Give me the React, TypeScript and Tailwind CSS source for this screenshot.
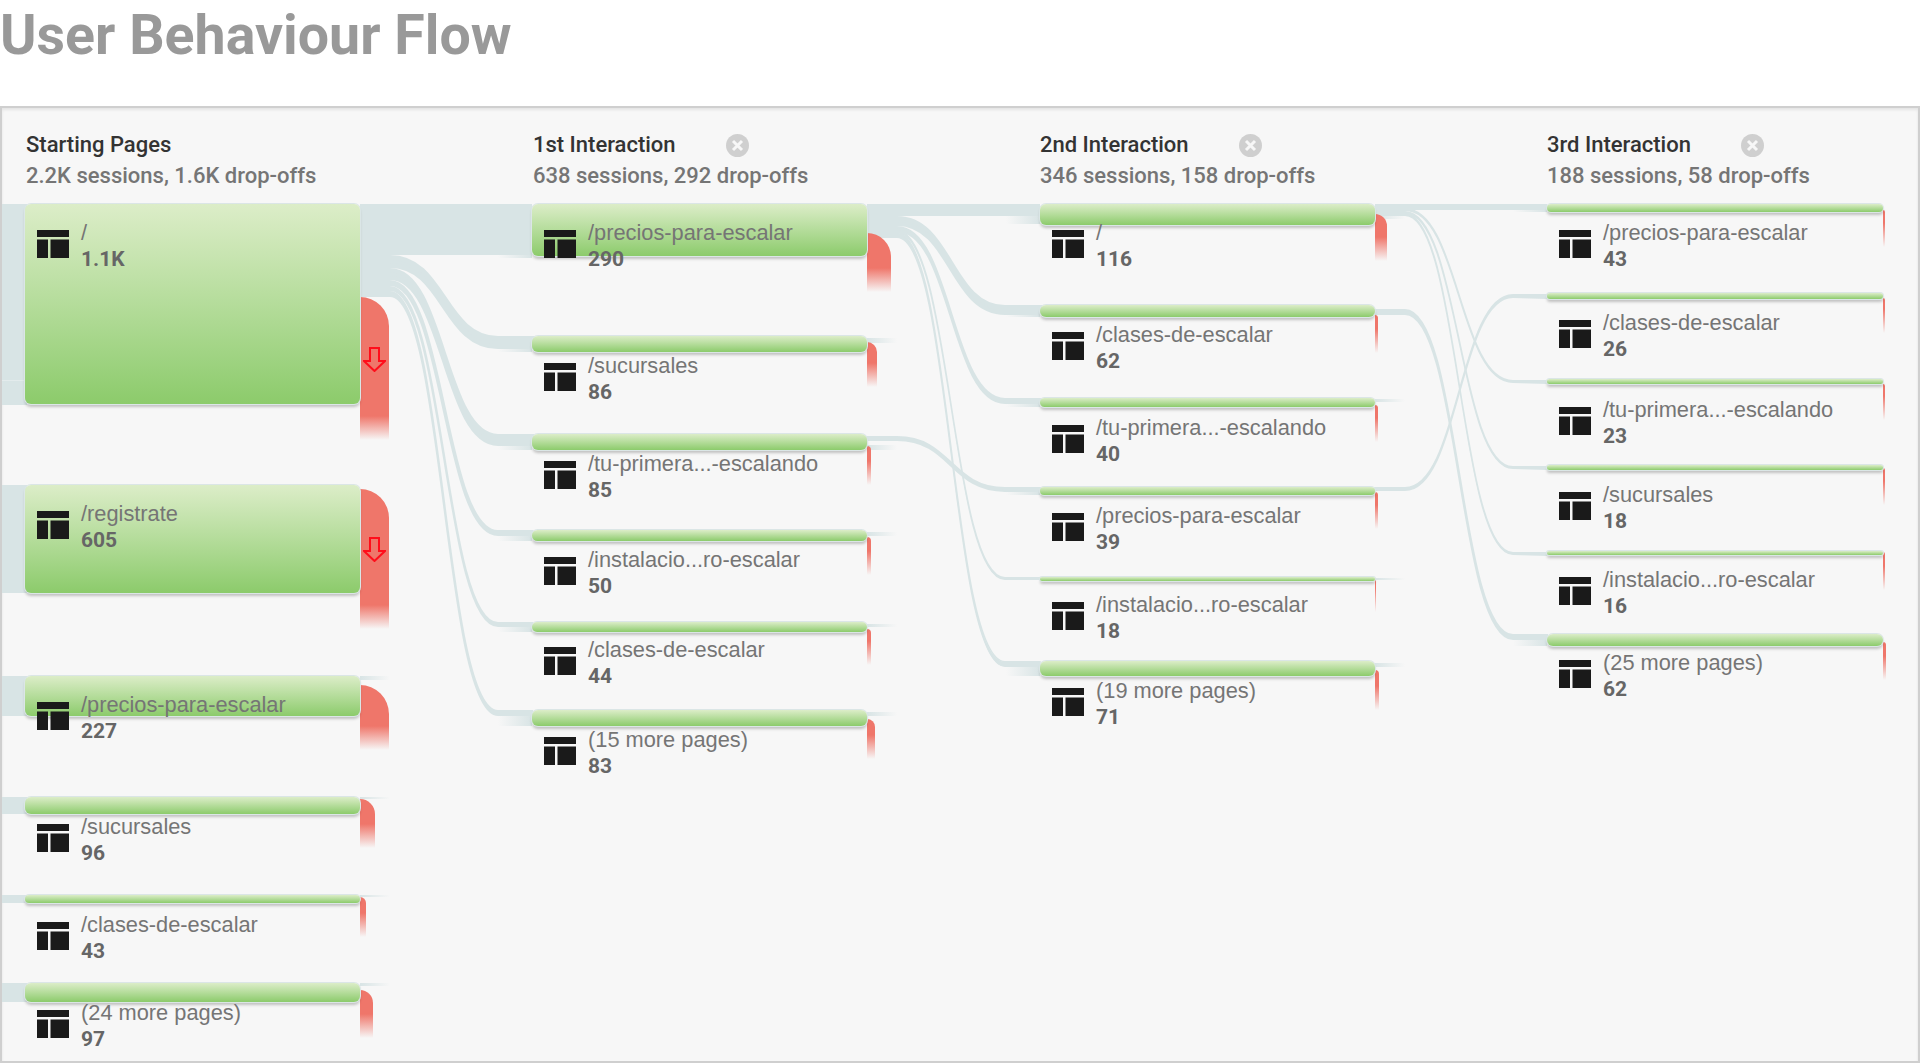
const FLOW = "#d8e4e5";

type PageNode = {
  top: number;
  bottom: number;
  label: string;
  value: string;
  labelY: number;
  dropTop: number;
  dropBottom: number;
  dropRight: number;
  arrowTop?: number;
};

type Column = { x: number; width: number; nodes: PageNode[] };

// [y at source, y at target, band height, min stroke]
type Ribbon = [number, number, number, number];

const headers = [
  { title: "Starting Pages", sub: "2.2K sessions, 1.6K drop-offs", close: false },
  { title: "1st Interaction", sub: "638 sessions, 292 drop-offs", close: true },
  { title: "2nd Interaction", sub: "346 sessions, 158 drop-offs", close: true },
  { title: "3rd Interaction", sub: "188 sessions, 58 drop-offs", close: true },
];

const columns: Column[] = [
  {
    x: 25,
    width: 335,
    nodes: [
      { top: 204, bottom: 404, label: "/", value: "1.1K", labelY: 233, dropTop: 297, dropBottom: 440, dropRight: 389, arrowTop: 347 },
      { top: 485, bottom: 593, label: "/registrate", value: "605", labelY: 514, dropTop: 489, dropBottom: 629, dropRight: 389, arrowTop: 537 },
      { top: 676, bottom: 716, label: "/precios-para-escalar", value: "227", labelY: 705, dropTop: 685, dropBottom: 750, dropRight: 389 },
      { top: 797, bottom: 814, label: "/sucursales", value: "96", labelY: 827, dropTop: 799, dropBottom: 848, dropRight: 375 },
      { top: 895, bottom: 903, label: "/clases-de-escalar", value: "43", labelY: 925, dropTop: 897, dropBottom: 937, dropRight: 366 },
      { top: 983, bottom: 1002, label: "(24 more pages)", value: "97", labelY: 1013, dropTop: 990, dropBottom: 1038, dropRight: 373 },
    ],
  },
  {
    x: 532,
    width: 335,
    nodes: [
      { top: 204, bottom: 256, label: "/precios-para-escalar", value: "290", labelY: 233, dropTop: 233, dropBottom: 292, dropRight: 891 },
      { top: 336, bottom: 352, label: "/sucursales", value: "86", labelY: 366, dropTop: 342, dropBottom: 387, dropRight: 877 },
      { top: 434, bottom: 450, label: "/tu-primera...-escalando", value: "85", labelY: 464, dropTop: 446, dropBottom: 485, dropRight: 871 },
      { top: 530, bottom: 541, label: "/instalacio...ro-escalar", value: "50", labelY: 560, dropTop: 537, dropBottom: 575, dropRight: 871 },
      { top: 622, bottom: 632, label: "/clases-de-escalar", value: "44", labelY: 650, dropTop: 629, dropBottom: 665, dropRight: 871 },
      { top: 710, bottom: 726, label: "(15 more pages)", value: "83", labelY: 740, dropTop: 719, dropBottom: 759, dropRight: 875 },
    ],
  },
  {
    x: 1040,
    width: 335,
    nodes: [
      { top: 204, bottom: 225, label: "/", value: "116", labelY: 233, dropTop: 214, dropBottom: 261, dropRight: 1387 },
      { top: 305, bottom: 317, label: "/clases-de-escalar", value: "62", labelY: 335, dropTop: 315, dropBottom: 353, dropRight: 1378 },
      { top: 398, bottom: 407, label: "/tu-primera...-escalando", value: "40", labelY: 428, dropTop: 405, dropBottom: 442, dropRight: 1378 },
      { top: 487, bottom: 495, label: "/precios-para-escalar", value: "39", labelY: 516, dropTop: 492, dropBottom: 529, dropRight: 1378 },
      { top: 577, bottom: 581, label: "/instalacio...ro-escalar", value: "18", labelY: 605, dropTop: 578, dropBottom: 612, dropRight: 1376 },
      { top: 661, bottom: 676, label: "(19 more pages)", value: "71", labelY: 691, dropTop: 670, dropBottom: 710, dropRight: 1379 },
    ],
  },
  {
    x: 1547,
    width: 336,
    nodes: [
      { top: 204, bottom: 212, label: "/precios-para-escalar", value: "43", labelY: 233, dropTop: 210, dropBottom: 247, dropRight: 1885 },
      { top: 293, bottom: 299, label: "/clases-de-escalar", value: "26", labelY: 323, dropTop: 298, dropBottom: 333, dropRight: 1885 },
      { top: 379, bottom: 384, label: "/tu-primera...-escalando", value: "23", labelY: 410, dropTop: 384, dropBottom: 420, dropRight: 1885 },
      { top: 465, bottom: 470, label: "/sucursales", value: "18", labelY: 495, dropTop: 468, dropBottom: 505, dropRight: 1885 },
      { top: 551, bottom: 555, label: "/instalacio...ro-escalar", value: "16", labelY: 580, dropTop: 552, dropBottom: 590, dropRight: 1885 },
      { top: 634, bottom: 646, label: "(25 more pages)", value: "62", labelY: 663, dropTop: 642, dropBottom: 680, dropRight: 1886 },
    ],
  },
];

// flows between neighbouring columns
const links: { from: number; to: number; ribbons: Ribbon[] }[] = [
  {
    from: 360,
    to: 532,
    ribbons: [
      [204, 204, 51, 0],
      [255, 336, 13, 5],
      [268, 434, 12, 4],
      [280, 530, 6, 3],
      [286, 622, 5, 2],
      [291, 710, 6, 2],
    ],
  },
  {
    from: 867,
    to: 1040,
    ribbons: [
      [204, 204, 12, 0],
      [216, 305, 10, 4],
      [226, 398, 6, 2.5],
      [230, 577, 3, 1.5],
      [232, 661, 6, 1.5],
      [436, 487, 5, 2.5],
    ],
  },
  {
    from: 1375,
    to: 1547,
    ribbons: [
      [204, 204, 6, 0],
      [208, 380, 3, 1.5],
      [211, 466, 3, 1.5],
      [213, 552, 3, 1.5],
      [309, 634, 6, 2],
      [487, 294, 4, 1.5],
    ],
  },
];

// left entry bands of the first column
const entries = [
  [2, 204, 25, 201, FLOW],
  [2, 380, 25, 1, "#e3ebec"],
  [2, 485, 25, 108, FLOW],
  [2, 676, 25, 40, FLOW],
  [2, 797, 25, 17, FLOW],
  [2, 895, 25, 8, FLOW],
  [2, 983, 25, 19, FLOW],
] as const;

// short fading tails: x, y, width, height
const tailsRight = [
  [360, 676, 30, 4],
  [360, 797, 30, 2],
  [360, 895, 30, 2],
  [360, 983, 30, 3],
  [867, 338, 30, 5],
  [867, 532, 30, 4],
  [867, 624, 30, 3],
  [867, 712, 30, 4],
  [867, 445, 30, 5],
  [1375, 399, 30, 3],
  [1375, 578, 30, 2],
  [1375, 663, 30, 4],
  [1375, 216, 30, 3],
];

const tailsLeft = [
  [498, 255, 34, 3],
  [498, 349, 34, 3],
  [498, 446, 34, 4],
  [498, 536, 34, 5],
  [498, 627, 34, 5],
  [498, 716, 34, 10],
  [1006, 216, 34, 8],
  [1006, 315, 34, 2],
  [1006, 404, 34, 3],
  [1006, 492, 34, 3],
  [1006, 667, 34, 9],
  [1513, 210, 34, 2],
  [1513, 298, 34, 1],
  [1513, 383, 34, 1],
  [1513, 469, 34, 1],
  [1513, 555, 34, 1],
  [1513, 640, 34, 6],
];

function ribbonPath(x0: number, x1: number, y0: number, y1: number, h: number) {
  const a = x0 + 30;
  const b = x0 + 138;
  const m = (a + b) / 2;
  return (
    `M${x0} ${y0} H${a} C${m} ${y0} ${m} ${y1} ${b} ${y1} H${x1} ` +
    `V${y1 + h} H${b} C${m} ${y1 + h} ${m} ${y0 + h} ${a} ${y0 + h} H${x0} Z`
  );
}

function PageIcon() {
  return (
    <svg width="32" height="28" viewBox="0 0 32 28" className="block">
      <rect x="0" y="0" width="32" height="7" fill="#1a1a1a" />
      <rect x="0" y="9.5" width="11" height="18.5" fill="#1a1a1a" />
      <rect x="13.5" y="9.5" width="18.5" height="18.5" fill="#1a1a1a" />
    </svg>
  );
}

function CloseIcon() {
  return (
    <svg width="23" height="23" viewBox="0 0 23 23" className="block">
      <circle cx="11.5" cy="11.5" r="11.5" fill="#cfcfcf" />
      <path d="M7 7 L16 16 M16 7 L7 16" stroke="#f7f7f7" strokeWidth="3" />
    </svg>
  );
}

function DropArrow() {
  return (
    <svg width="23" height="25" viewBox="0 0 23 25" className="block">
      <path d="M7 1 H16 V14 H22 L11.5 24 L1 14 H7 Z" fill="none" stroke="#ff0d1a" strokeWidth="2" />
    </svg>
  );
}

function Flows() {
  return (
    <svg width="1920" height="1063" viewBox="0 0 1920 1063" className="absolute left-0 top-0">
      <defs>
        <linearGradient id="fadeRight">
          <stop offset="0" stopColor={FLOW} />
          <stop offset="1" stopColor={FLOW} stopOpacity="0" />
        </linearGradient>
        <linearGradient id="fadeLeft">
          <stop offset="0" stopColor={FLOW} stopOpacity="0" />
          <stop offset="1" stopColor={FLOW} />
        </linearGradient>
      </defs>
      {entries.map(([x, y, w, h, fill], i) => (
        <rect key={i} x={x} y={y} width={w} height={h} fill={fill} />
      ))}
      {links.map((link, i) =>
        link.ribbons.map(([y0, y1, h, s], j) => (
          <path
            key={`${i}-${j}`}
            d={ribbonPath(link.from, link.to, y0 + s / 2, y1 + s / 2, Math.max(h - s, 0))}
            fill={FLOW}
            stroke={FLOW}
            strokeWidth={s}
          />
        )),
      )}
      {tailsRight.map(([x, y, w, h], i) => (
        <rect key={i} x={x} y={y} width={w} height={h} fill="url(#fadeRight)" />
      ))}
      {tailsLeft.map(([x, y, w, h], i) => (
        <rect key={i} x={x} y={y} width={w} height={h} fill="url(#fadeLeft)" />
      ))}
    </svg>
  );
}

function Node({ x, width, node }: { x: number; width: number; node: PageNode }) {
  return (
    <>
      <div
        className="absolute rounded-tr-[30px] bg-[linear-gradient(#ef766a_0,#ef766a_calc(100%-24px),rgba(239,118,106,0)_100%)]"
        style={{
          left: x + width,
          top: node.dropTop,
          width: node.dropRight - (x + width),
          height: node.dropBottom - node.dropTop,
        }}
      />
      {node.arrowTop !== undefined && (
        <div className="absolute" style={{ left: x + width + 3, top: node.arrowTop }}>
          <DropArrow />
        </div>
      )}
      <div
        className="absolute rounded-[6px] bg-gradient-to-b from-[#dcedc8] to-[#8ccb6b] shadow-[0_0_0_1px_#dbe6e6,0_3px_3px_rgba(0,0,0,0.22)]"
        style={{ left: x, top: node.top, width, height: node.bottom - node.top }}
      />
      <div className="absolute" style={{ left: x + 12, top: node.labelY - 3 }}>
        <PageIcon />
      </div>
      <div className="absolute flex flex-col whitespace-nowrap" style={{ left: x + 56, top: node.labelY - 13 }}>
        <span className="font-['Liberation_Sans',sans-serif] text-[21.8px] leading-[26px] text-[#757575]">
          {node.label}
        </span>
        <span className="font-['Roboto',sans-serif] text-[21px] font-bold leading-[26px] text-[#666666]">
          {node.value}
        </span>
      </div>
    </>
  );
}

export default function App() {
  return (
    <div className="relative flex h-[1063px] w-full flex-col overflow-hidden bg-white font-['Roboto',sans-serif]">
      <div className="h-[106px] shrink-0">
        <h1 className="text-[55.5px] font-bold leading-[72px] text-[#999999]">User Behaviour Flow</h1>
      </div>
      <div className="flex flex-1 border-2 border-[#cfcfcf] bg-[#f7f7f7] pl-[24px] pt-[25px] shadow-[inset_0_2px_3px_rgba(0,0,0,0.08)]">
        {headers.map((h) => (
          <div key={h.title} className="w-[507px] shrink-0">
            <div className="flex h-6 items-center gap-[50px]">
              <span className="text-[22px] font-medium leading-6 text-[#333333]">{h.title}</span>
              {h.close && <CloseIcon />}
            </div>
            <div className="mt-[7px] text-[22px] font-medium leading-6 text-[#757575]">{h.sub}</div>
          </div>
        ))}
      </div>
      <Flows />
      {columns.map((col) =>
        col.nodes.map((node) => <Node key={`${col.x}-${node.top}`} x={col.x} width={col.width} node={node} />),
      )}
    </div>
  );
}
